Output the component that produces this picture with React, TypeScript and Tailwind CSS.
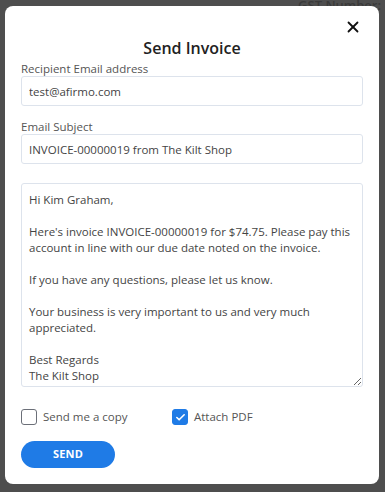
import React, { useState } from 'react';
import { X, Check } from 'lucide-react';

const MESSAGE = `Hi Kim Graham,

Here's invoice INVOICE-00000019 for $74.75. Please pay this account in line with our due date noted on the invoice.

If you have any questions, please let us know.

Your business is very important to us and very much appreciated.

Best Regards
The Kilt Shop`;

export default function App() {
  const [email, setEmail] = useState('test@afirmo.com');
  const [subject, setSubject] = useState('INVOICE-00000019 from The Kilt Shop');
  const [message, setMessage] = useState(MESSAGE);
  const [sendCopy, setSendCopy] = useState(false);
  const [attachPdf, setAttachPdf] = useState(true);

  return (
    <div className="relative w-[385px] h-[492px] overflow-hidden bg-[#4e4e4e] font-['Open_Sans',sans-serif] text-[#4a4a4a]">
      {/* page behind the overlay */}
      <div className="absolute top-[-3px] right-[4px] text-[13px] leading-4 font-semibold text-[#3a3a3a]">GST Number:</div>

      <div className="absolute left-[5px] top-[6px] w-[374px] h-[478px] rounded-[8px] bg-white px-4">
        <div className="flex justify-end pt-[12px] pr-[1px]">
          <button type="button" className="text-[#111]">
            <X className="w-[18px] h-[18px]" strokeWidth={2.4} />
          </button>
        </div>

        <h2 className="mt-[2px] text-center text-[16px] font-semibold text-[#222] leading-5">Send Invoice</h2>

        <div className="mt-[4px]">
          <label className="block text-[11.5px] leading-[14px] text-[#555]">Recipient Email address</label>
          <input
            value={email}
            onChange={(e) => setEmail(e.target.value)}
            className="w-full h-[30px] rounded-[3px] border border-[#dde3ec] px-[7px] text-[11.5px] text-[#444] outline-none"
          />
        </div>

        <div className="mt-[14px]">
          <label className="block text-[11.5px] leading-[14px] text-[#555]">Email Subject</label>
          <input
            value={subject}
            onChange={(e) => setSubject(e.target.value)}
            className="w-full h-[30px] rounded-[3px] border border-[#dde3ec] px-[7px] text-[11.5px] text-[#444] outline-none"
          />
        </div>

        <textarea
          value={message}
          onChange={(e) => setMessage(e.target.value)}
          className="mt-[19px] block w-full h-[204px] rounded-[3px] border border-[#dde3ec] px-[7px] py-[8px] text-[11.5px] leading-[16px] text-[#444] outline-none"
        />

        <div className="mt-[22px] flex items-center">
          <label className="w-[151px] flex items-center gap-[6px] text-[11.5px] leading-4 text-[#555]">
            <button
              type="button"
              onClick={() => setSendCopy(!sendCopy)}
              className={`w-[16px] h-[16px] rounded-[3px] border flex items-center justify-center ${sendCopy ? 'bg-[#1f7be6] border-[#1f7be6]' : 'border-[#6b6f78] bg-white'}`}
            >
              {sendCopy && <Check className="w-[11px] h-[11px] text-white" strokeWidth={3.5} />}
            </button>
            Send me a copy
          </label>
          <label className="flex items-center gap-[6px] text-[11.5px] leading-4 text-[#555]">
            <button
              type="button"
              onClick={() => setAttachPdf(!attachPdf)}
              className={`w-[16px] h-[16px] rounded-[3px] border flex items-center justify-center ${attachPdf ? 'bg-[#1f7be6] border-[#1f7be6]' : 'border-[#6b6f78] bg-white'}`}
            >
              {attachPdf && <Check className="w-[11px] h-[11px] text-white" strokeWidth={3.5} />}
            </button>
            Attach PDF
          </label>
        </div>

        <button
          type="button"
          className="mt-[16px] block w-[94px] h-[27px] rounded-full bg-[#1f7be6] text-white text-[11px] font-bold tracking-[0.2px]"
        >
          SEND
        </button>
      </div>
    </div>
  );
}
